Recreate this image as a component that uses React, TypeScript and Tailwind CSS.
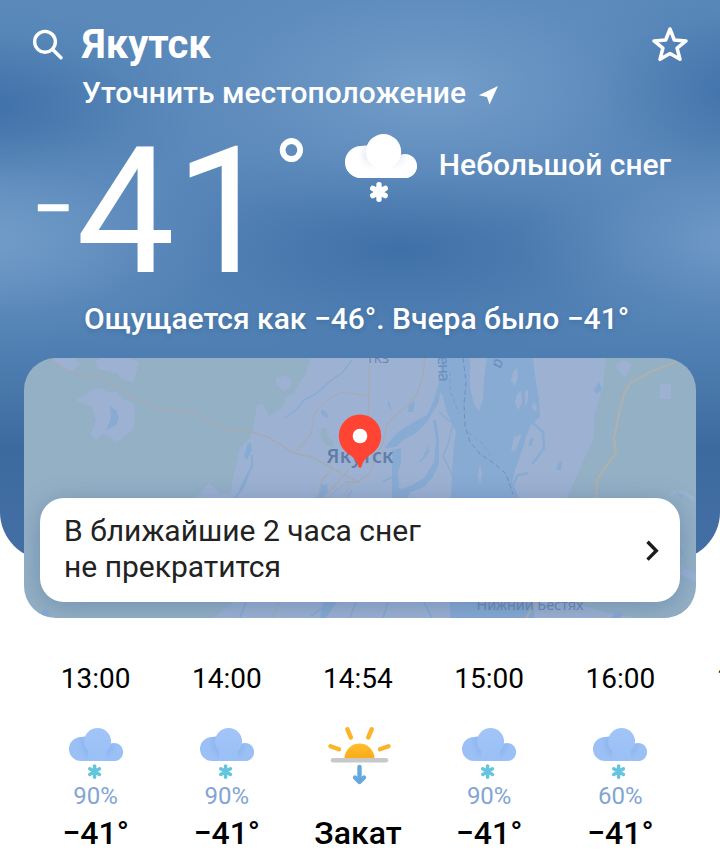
import type { ReactNode } from "react"

type Hora = {
  hora: string
  tipo: "nieve" | "ocaso"
  prob?: string
  valor: string
}

const horas: Hora[] = [
  { hora: "13:00", tipo: "nieve", prob: "90%", valor: "−41°" },
  { hora: "14:00", tipo: "nieve", prob: "90%", valor: "−41°" },
  { hora: "14:54", tipo: "ocaso", valor: "Закат" },
  { hora: "15:00", tipo: "nieve", prob: "90%", valor: "−41°" },
  { hora: "16:00", tipo: "nieve", prob: "60%", valor: "−41°" },
]

function Copo({ x, y, r, grosor, color }: { x: number; y: number; r: number; grosor: number; color: string }) {
  const dx = r * 0.87
  const dy = r * 0.5
  return (
    <path
      d={`M${x} ${y - r}V${y + r}M${x - dx} ${y - dy}L${x + dx} ${y + dy}M${x - dx} ${y + dy}L${x + dx} ${y - dy}`}
      stroke={color}
      strokeWidth={grosor}
      strokeLinecap="round"
      fill="none"
    />
  )
}

function NubeGrande() {
  return (
    <svg width="76" height="72" viewBox="343 132 76 72">
      <defs>
        <radialGradient id="sombraNube" gradientUnits="userSpaceOnUse" cx="383.5" cy="155" r="25">
          <stop offset="0.6" stopColor="#e3eaf7" />
          <stop offset="1" stopColor="#fff" />
        </radialGradient>
        <linearGradient id="baseNube" x1="0" y1="0" x2="0" y2="1">
          <stop offset="0.35" stopColor="#fff" stopOpacity="0" />
          <stop offset="0.75" stopColor="#fff" />
        </linearGradient>
      </defs>
      <path d="M361 146a16 16 0 0 0 0 32H405a12 12 0 1 0-6-22.4L376 150A16 16 0 0 0 361 146Z" fill="url(#sombraNube)" />
      <path d="M361 146a16 16 0 0 0 0 32H405a12 12 0 1 0-6-22.4L376 150A16 16 0 0 0 361 146Z" fill="url(#baseNube)" />
      <circle cx="383.5" cy="151.8" r="17.7" fill="#fff" />
      <Copo x={379} y={192} r={7.2} grosor={5.4} color="#fff" />
    </svg>
  )
}

function NubeNieve() {
  return (
    <svg width="60" height="56" viewBox="66 725 60 56">
      <defs>
        <radialGradient id="nubeAzul" gradientUnits="userSpaceOnUse" cx="97.5" cy="743" r="20">
          <stop offset="0.6" stopColor="#8eb5ef" />
          <stop offset="1" stopColor="#9bc0f6" />
        </radialGradient>
        <linearGradient id="nubeClara" x1="0" y1="0" x2="0" y2="1">
          <stop offset="0" stopColor="#a2c5f8" />
          <stop offset="1" stopColor="#9bc0f6" />
        </linearGradient>
      </defs>
      <path d="M81 737a12 12 0 0 0 0 24H114a9 9 0 1 0-4-17L93 740A12 12 0 0 0 81 737Z" fill="url(#nubeAzul)" />
      <path d="M88 750H107V761H88Z" fill="#9bc0f6" />
      <circle cx="97.6" cy="741.5" r="13.5" fill="url(#nubeClara)" />
      <Copo x={94.6} y={771.6} r={5.6} grosor={3.5} color="#65c4de" />
    </svg>
  )
}

function Ocaso() {
  return (
    <svg width="68" height="62" viewBox="326 724 68 62" fill="none" strokeLinecap="round" strokeLinejoin="round">
      <defs>
        <linearGradient id="sol" x1="0" y1="0" x2="0" y2="1">
          <stop offset="0" stopColor="#ffbe32" />
          <stop offset="1" stopColor="#fbab16" />
        </linearGradient>
      </defs>
      <path d="M344.5 758.500a15 15 0 0 1 30 0Z" fill="url(#sol)" />
      <path d="M347.300 729.200l3.600 8.300M371.800 729.200l-3.600 8.300M330.500 746.300l8.500 3M388.500 746.300l-8.500 3" stroke="#fbb42a" strokeWidth="4.400" />
      <path d="M333 760.300H386" stroke="#c8c8ca" strokeWidth="4.400" />
      <path d="M359.500 767V781M355 777.500l4.500 4.500 4.500-4.500" stroke="#64a8df" strokeWidth="4.400" />
    </svg>
  )
}

function Mapa() {
  return (
    <svg className="block" width="672" height="260" viewBox="24 358 672 260" fill="none">
      <rect x="24" y="358" width="672" height="260" fill="#94b0c5" />
      {/* zona despejada alrededor de la ciudad */}
      <g fill="#9db2d2">
        <path d="M311 358L306 374L297 386L294 394L285 398L284 406L269 416L263 404L257 405L254 425L250 439L240 448L235 470L230 493L221 494L209 483L198 496L190 520L236 600L213 618H640L600 580L556 525L568 496L580 468L594 438L594 416L603 386L606 358Z" />
        <path d="M95 361L98 369L117 373L122 379L133 382L137 371L139 362L127 358H104Z" />
        <path d="M76 400L85 395L93 389L101 388L107 392L118 392L122 399L134 403L135 421L133 430L117 442L108 435L103 434L96 440L91 434L96 420L92 407Z" />
        <path d="M276 379L285 375L292 381L290 388L284 391L276 385Z" />
        <path d="M52 359L66 371L72 371L80 364L74 358H56Z" />
        <path d="M615 366L622 360L632 364L628 373L624 377Z" />
        <path d="M660 384H671V399H660Z" />
        <path d="M668 498L674 490L684 494L695 502V498L686 492L678 491ZM680 566L696 574V582L680 574Z" />
      </g>
      <g fill="#94b0c5">
        <path d="M321 428L326 428L328 437L334 442L333 447L326 445L321 437Z" />
        <path d="M568 602H696V618H640L612 614L590 608Z" />
      </g>
      {/* río y canales */}
      <g fill="#87abd3">
        <path d="M440 358H533L535 375L539 400L540 417L530 426L523 448L515 470L512 483L520 498L535 620H450L451 498L452 470L454 446L456 432L447 412L442 395Z" />
        <path d="M440 378L434 400L427 415L414 422L398 432L390 441L385 448L396 447L403 440L415 434L427 422L433 412L443 396Z" />
        <path d="M433 420L436 440L434 462L424 478L410 486L401 489L392 484V500H407L410 492L424 487L433 477L439 464L439 440L436 420Z" />
        <path d="M392 450L401 448L401 462L398 472L399 487L392 484Z" />
        <path d="M110 406L116 410L119 418L116 425L110 428L106 431L111 418Z" />
        <path d="M321 410L325 411L329 416L327 418L321 414Z" />
        <path d="M322 485L327 484L328 492L325 498H316Z" />
        <path d="M247 445L251 442L252 450L247 460L244 456Z" />
        <path d="M409 405L415 401L413 412L408 412Z" />
        <path d="M599 382L602 390L596 394L594 390Z" />
        <path d="M558 464L562 460L561 470L556 470Z" />
        <path d="M41 614L44 609L49 612V618H43Z" />
        <path d="M323 602H337L326 618H320Z" />
        <path d="M678 494L684 495L681 499ZM680 549L684 552L682 557ZM615 612L623 614L620 618H612Z" />
        <path d="M386 408L389 401L392 411L388 405Z" />
      </g>
      {/* islas */}
      <g fill="#9db2d2">
        <path d="M470 358H487L484 380L483 400L479 411L474 404L470 388Z" />
        <path d="M513 372L517 368L518 378L515 386L511 381Z" />
        <path d="M517 394L521 391L522 403L518 410L515 402Z" />
        <path d="M525 391L528 390L528 400L525 407Z" />
        <path d="M533 402L537 406L536 412L532 408Z" />
        <path d="M514 437L522 434L516 450L511 452Z" />
        <path d="M532 424L538 430L539 440L533 454L530 466L519 474L522 456L526 436Z" />
        <path d="M516 476L528 475L532 482L531 498H519L514 486Z" />
        <path d="M480 464L482 474L480 484L478 476Z" />
        <path d="M440 392L444 398L438 408Z" />
      </g>
      <g stroke="#87abd3" strokeWidth="1.400">
        <path d="M352 360L342 373L330 381L316 394L304 400L296 410L286 417" />
        <path d="M252 455L252 466L248 475L244 486L235 498M250 470L240 490" strokeWidth="2" />
        <path d="M439 412L453 424L448 444L443 456L448 466L453 477" />
        <path d="M532 422L543 432L544 448L537 458L532 464M528 473L518 475L513 485" strokeWidth="2.400" />
        <path d="M532 438L530 446" strokeWidth="3" />
        <path d="M420 462L430 450M429 447L424 455M382 482L392 477M347 498L352 490" />
        <path d="M240 618L246 602M350 618L356 602M383 618L388 602M432 618L424 602M311 616L322 608" strokeWidth="1.800" />
      </g>
      {/* carreteras */}
      <g stroke="#a4abb8" strokeWidth="1.800" strokeLinejoin="round">
        <path d="M51 360L65 369L80 374L104 377L117 388L132 398L144 402L158 409L192 412L205 419L225 429L252 432L268 437L281 445L293 453L312 457L332 468L348 477L360 482" />
        <path d="M295 452L311 434L315 412L327 400L341 392L367 396" strokeWidth="1.400" />
        <path d="M369 364V396L368 420" strokeWidth="1.500" />
        <path d="M425 358L423 374L418 392L409 405L393 417L387 424L383 443L375 460L369 474L358 482L346 482L332 494L326 500" strokeWidth="1.500" />
        <path d="M349 469L335 485L323 498M332 469L322 480L318 498M343 498L350 484" strokeWidth="1.400" />
        <path d="M280 602L272 618" strokeWidth="1.400" />
      </g>
      <path d="M676 362L652 371L630 383L624 394L619 414L614 438L616 453L607 465L597 480L596 500M536 602L526 618" stroke="#acb0ae" strokeWidth="2.300" strokeLinejoin="round" />
      <path d="M463 358L466 382L464 405L465 426L470 442L480 454L495 464L506 474L513 494" stroke="#6e90bd" strokeWidth="1" strokeDasharray="5 3" />
      <path d="M450 372L450 390L459 414M469 433L484 445L493 460" stroke="#789bc6" strokeWidth="0.800" strokeDasharray="4 3" />

      <g fontFamily="Noto Sans, sans-serif" fill="#6b86b0">
        <text x="326.500" y="463.300" fontSize="19.500" fontWeight="600" textLength="67" fill="#617da8">Якутск</text>
        <text x="366.500" y="363" fontSize="13">ТКЗ</text>
        <text x="476.500" y="610" fontSize="14.500" textLength="107">Нижний Бестях</text>
        <text transform="translate(437.500 346) rotate(88)" fontSize="16" textLength="36" fill="#6c8fbd">Лена</text>
        <text transform="translate(495 358) rotate(105)" fontSize="16" fontStyle="italic" fill="#6c8fbd">а</text>
      </g>

      <path d="M360 414.500a21.200 21.200 0 0 0-21.200 21.200c0 9 5 15.500 12 19.800 4 2.500 6.500 6.500 7.600 11 .4 1.800 2.800 1.800 3.200 0 1.100-4.500 3.600-8.500 7.600-11 7-4.300 12-10.800 12-19.800A21.200 21.200 0 0 0 360 414.500Z" fill="#ff4433" />
      <circle cx="360" cy="436" r="7.300" fill="#fff" />
    </svg>
  )
}

function Columna({ children }: { children: ReactNode }) {
  return <div className="flex w-[131.2px] shrink-0 flex-col items-center text-black">{children}</div>
}

export default function App() {
  return (
    <div className="h-[868px] w-[720px] overflow-hidden bg-white font-['Roboto',sans-serif]">
      <header className="h-[560px] rounded-b-[48px] bg-[radial-gradient(ellipse_300px_140px_at_430px_88px,#749eca_0%,#749eca80_35%,#749eca26_70%,#749eca00_100%),radial-gradient(ellipse_250px_110px_at_-20px_240px,#729dc9_0%,#729dc999_35%,#729dc926_70%,#729dc900_100%),radial-gradient(ellipse_220px_100px_at_740px_240px,#6f9ac7_0%,#6f9ac780_35%,#6f9ac726_70%,#6f9ac700_100%),radial-gradient(ellipse_230px_100px_at_-20px_105px,#3f70a8_0%,#3f70a899_35%,#3f70a826_70%,#3f70a800_100%),radial-gradient(ellipse_210px_110px_at_740px_90px,#4172aa_0%,#4172aa99_35%,#4172aa26_70%,#4172aa00_100%),radial-gradient(ellipse_320px_110px_at_400px_250px,#3f70a7_0%,#3f70a799_35%,#3f70a733_70%,#3f70a700_100%),linear-gradient(180deg,#5a89ba_0%,#5a87ba_45%,#5080b3_62%,#3d6a9e_80%,#436fa5_100%)] px-6">
        <div className="flex h-[68px] items-start pt-5 text-white">
          <svg className="mt-[6px] ml-[6px]" width="36" height="36" viewBox="30 26 36 36" fill="none" stroke="#fff" strokeWidth="3.400" strokeLinecap="round">
            <circle cx="45" cy="41.800" r="10.400" />
            <path d="M52.700 49.500L61 57.800" />
          </svg>
          <h1 className="mt-px ml-[16px] text-[40px] leading-[48px] font-bold">Якутск</h1>
          <svg className="mt-[4px] mr-[6px] ml-auto" width="40" height="40" viewBox="650 24 40 40" fill="none" stroke="#fff" strokeWidth="3.500" strokeLinejoin="round">
            <path d="M670 29L674.300 40L686 40.900L677.100 48.200L680 59.300L670 53.400L660 59.300L662.900 48.200L654 40.900L665.700 40Z" />
          </svg>
        </div>

        <div className="flex h-[50px] items-center pl-[58px] text-white">
          <span className="text-[30px] leading-[36px] font-medium">Уточнить местоположение</span>
          <svg className="mt-[4px] ml-[11px]" width="22" height="22" viewBox="477 84 22 22">
            <path d="M498 86L478.800 95.200L487 97L489.500 104.500Z" fill="#fff" />
          </svg>
        </div>

        <div className="flex h-[182px] items-start text-white">
          <span className="mt-[53px] ml-[8px] w-[48px] text-[74px] leading-[76px] font-medium">−</span>
          <span className="mt-[6px] -ml-[4px] h-[160px] text-[176px] leading-[176px]">41</span>
          <span className="mt-[9px] w-[40px] text-[94px] leading-[94px]">°</span>
          <div className="mt-[14px] ml-[29px]">
            <NubeGrande />
          </div>
          <span className="mt-[29px] ml-[20px] text-[30px] leading-[36px] font-medium whitespace-nowrap">Небольшой снег</span>
        </div>

        <div className="h-[58px] pt-px pl-[60px] text-[30px] leading-[36px] font-medium whitespace-nowrap text-white [text-shadow:0_2px_5px_rgba(20,50,90,0.2)]">
          Ощущается как −46°. Вчера было −41°
        </div>

        <section className="relative h-[260px] w-[672px] overflow-hidden rounded-[32px]">
          <Mapa />
          <button className="absolute inset-x-4 bottom-4 flex h-[104px] items-center justify-between rounded-3xl bg-white pr-[21px] pl-6 text-left shadow-[0_4px_26px_rgba(70,105,150,0.45)]">
            <span className="-mt-[2px] text-[30px] leading-[36px] text-[#222]">
              В ближайшие 2 часа снег
              <br />
              не прекратится
            </span>
            <svg className="mt-[2px]" width="14" height="24" viewBox="645 539 14 24" fill="none" stroke="#1c1c1c" strokeWidth="3.400">
              <path d="M647.500 541.800L656.300 550.700L647.500 559.600" />
            </svg>
          </button>
        </section>
      </header>

      <main className="mt-[98px] flex pl-[30px]">
        {horas.map((h) => (
          <Columna key={h.hora}>
            <span className="h-[42px] pt-[5px] text-[28px] leading-[32px]">{h.hora}</span>
            <div className="mt-[24px] flex h-[62px] justify-center">
              {h.tipo === "nieve" ? (
                <div className="mt-[1px]">
                  <NubeNieve />
                </div>
              ) : (
                <div className="ml-[5px]">
                  <Ocaso />
                </div>
              )}
            </div>
            <span className="-mt-[4px] h-[28px] text-[24px] leading-[28px] text-[#82a5d4]">{h.prob}</span>
            <span className="mt-[5px] text-[32px] leading-[36px] font-medium">{h.valor}</span>
          </Columna>
        ))}
        <Columna>
          <span className="h-[42px] pt-[5px] text-[28px] leading-[32px]">17:00</span>
        </Columna>
      </main>
    </div>
  )
}
